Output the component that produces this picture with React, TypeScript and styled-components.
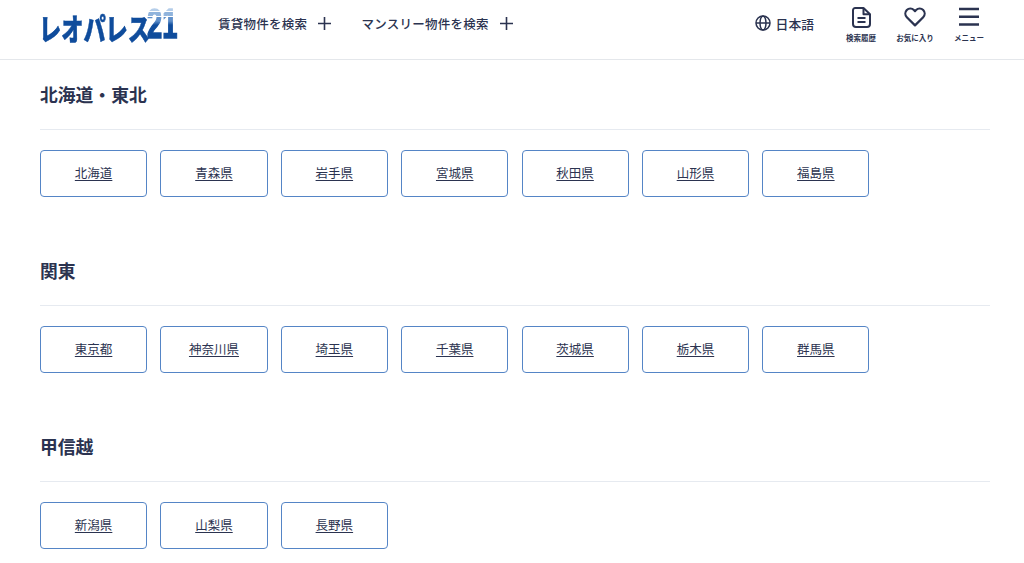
import React from "react";
import styled, { createGlobalStyle } from "styled-components";

const FONT = `"Noto Sans CJK JP", "Noto Sans", sans-serif`;
const INK = "#2b3350";

const Global = createGlobalStyle`
  html, body { margin: 0; padding: 0; background: #fff; overflow: hidden; }
  body { font-family: ${FONT}; color: ${INK}; }
  * { box-sizing: border-box; }
`;

const Header = styled.header`
  display: flex;
  align-items: flex-start;
  height: 60px;
  padding: 0 28px 0 40px;
  border-bottom: 1px solid #e4e7eb;
`;
const Logo = styled.div`
  display: flex;
  align-items: flex-start;
  width: 178px;
  flex: none;
  color: #0f4c9c;
  font-weight: 900;
  white-space: nowrap;
`;
const LogoKana = styled.span`
  display: block;
  flex: none;
  width: 108px;
  font-size: 30px;
  line-height: 44px;
  margin-top: 5px;
  margin-left: -1px;
  -webkit-text-stroke: 0.5px #0f4c9c;
  transform: scaleX(0.74);
  transform-origin: left center;
`;
const LogoNum = styled.span`
  display: block;
  flex: none;
  font-family: "Liberation Sans", sans-serif;
  font-weight: 700;
  font-size: 42px;
  line-height: 48px;
  padding-right: 4px;
  -webkit-text-stroke: 1.6px transparent;
  transform: scaleX(0.65);
  transform-origin: left center;
  background: linear-gradient(
    to bottom,
    #b4cde9 0 11px,
    #ffffff 11px 12.5px,
    #8fb3dc 12.5px 16px,
    #ffffff 16px 17.5px,
    #5f8fca 17.5px 21px,
    #0f4c9c 25px
  );
  -webkit-background-clip: text;
  background-clip: text;
  color: transparent;
`;
const Nav = styled.nav`
  display: flex;
  gap: 30px;
  margin-top: 13px;
`;
const NavItem = styled.div`
  display: flex;
  align-items: center;
  gap: 11px;
  font-size: 12.5px;
  font-weight: 500;
  height: 20px;
  letter-spacing: 0.27px;
`;
const Right = styled.div`
  display: flex;
  margin-left: auto;
  align-items: flex-start;
`;
const Lang = styled.div`
  display: flex;
  align-items: center;
  gap: 5px;
  font-size: 12.8px;
  font-weight: 500;
  height: 20px;
  margin-top: 13px;
  margin-right: 20px;
`;
const IconBtn = styled.div`
  display: flex;
  flex-direction: column;
  align-items: center;
  width: 54px;
  padding-top: 7px;
`;
const IconSlot = styled.div`
  display: flex;
  align-items: center;
  justify-content: center;
  height: 20px;
  svg { display: block; }
`;
const IconLabel = styled.span`
  font-size: 7.5px;
  font-weight: 700;
  line-height: 10px;
  margin-top: 6px;
  white-space: nowrap;
`;

const Main = styled.main`
  padding: 0 34px 0 40px;
`;
const Section = styled.section`
  height: 176px;
`;
const Title = styled.h2`
  margin: 0;
  height: 70px;
  padding-top: 20px;
  font-size: 17.8px;
  line-height: 28px;
  font-weight: 700;
  border-bottom: 1px solid #e6eaf0;
`;
const Grid = styled.div`
  display: grid;
  grid-template-columns: repeat(8, 107.2px);
  column-gap: 13.2px;
  margin-top: 20px;
`;
const Pref = styled.a`
  display: flex;
  align-items: center;
  justify-content: center;
  height: 47px;
  padding-bottom: 2px;
  border: 1px solid #5585c6;
  border-radius: 4px;
  font-size: 12.5px;
  color: ${INK};
  text-decoration: underline;
  text-underline-offset: 2px;
  text-decoration-thickness: 1px;
`;

const Plus = () => (
  <svg width="13" height="13" viewBox="0 0 13 13" fill="none" stroke={INK} strokeWidth="1.6">
    <path d="M6.5 0v13M0 6.5h13" />
  </svg>
);

const sections = [
  { title: "北海道・東北", items: ["北海道", "青森県", "岩手県", "宮城県", "秋田県", "山形県", "福島県"] },
  { title: "関東", items: ["東京都", "神奈川県", "埼玉県", "千葉県", "茨城県", "栃木県", "群馬県"] },
  { title: "甲信越", items: ["新潟県", "山梨県", "長野県"] },
];

export default function App() {
  return (
    <>
      <Global />
      <Header>
        <Logo>
          <LogoKana>レオパレス</LogoKana>
          <LogoNum>21</LogoNum>
        </Logo>
        <Nav>
          <NavItem>賃貸物件を検索 <Plus /></NavItem>
          <NavItem>マンスリー物件を検索 <Plus /></NavItem>
        </Nav>
        <Right>
          <Lang>
            <svg width="16" height="16" viewBox="0 0 16 16" fill="none" stroke={INK} strokeWidth="1.5">
              <circle cx="8" cy="8" r="7" />
              <ellipse cx="8" cy="8" rx="3" ry="7" />
              <path d="M1 8h14" />
            </svg>
            日本語
          </Lang>
          <IconBtn>
            <IconSlot>
              <svg width="19" height="21" viewBox="0 0 19 21" fill="none" stroke={INK} strokeWidth="2" strokeLinejoin="round">
                <path d="M3.2 1h8.3l6.5 6.2v9.8a3 3 0 0 1-3 3H4a3 3 0 0 1-3-3V3.2A2.2 2.2 0 0 1 3.2 1z" />
                <path d="M11.5 1.3v5.9h6.2M5.5 11h8M5.5 15h8" />
              </svg>
            </IconSlot>
            <IconLabel>検索履歴</IconLabel>
          </IconBtn>
          <IconBtn>
            <IconSlot>
              <svg width="22" height="20" viewBox="0 0 22 20" fill="none" stroke={INK} strokeWidth="2.2" strokeLinejoin="round">
                <path d="M11 18.4 2.8 10.2a5.2 5.2 0 0 1 0-7.2 5 5 0 0 1 7.1 0L11 4.1 12.1 3a5 5 0 0 1 7.1 0 5.2 5.2 0 0 1 0 7.2z" />
              </svg>
            </IconSlot>
            <IconLabel>お気に入り</IconLabel>
          </IconBtn>
          <IconBtn>
            <IconSlot>
              <svg width="20" height="20" viewBox="0 0 20 20" fill="none" stroke={INK} strokeWidth="2.4">
                <path d="M0 2h20M0 9.7h20M0 17.5h20" />
              </svg>
            </IconSlot>
            <IconLabel>メニュー</IconLabel>
          </IconBtn>
        </Right>
      </Header>
      <Main>
        {sections.map((s) => (
          <Section key={s.title}>
            <Title>{s.title}</Title>
            <Grid>
              {s.items.map((i) => (
                <Pref key={i} href="#">{i}</Pref>
              ))}
            </Grid>
          </Section>
        ))}
      </Main>
    </>
  );
}
